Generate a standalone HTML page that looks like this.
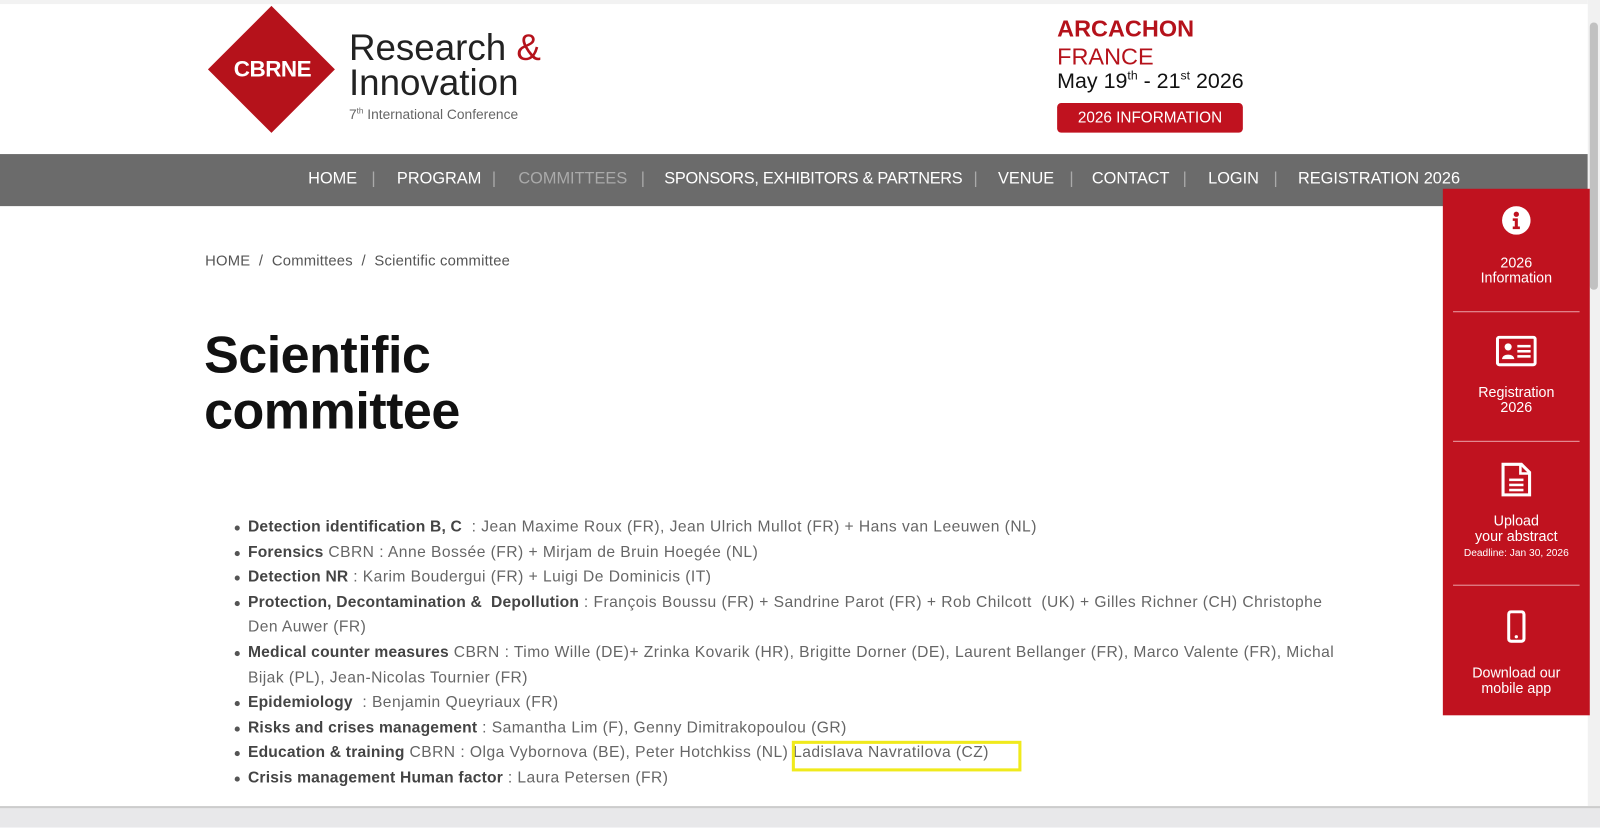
<!DOCTYPE html>
<html><head><meta charset="utf-8"><style>
*{margin:0;padding:0;box-sizing:border-box}
body{width:1600px;height:811px;overflow:hidden;background:#fff;font-family:"Liberation Sans",sans-serif;position:relative;color:#555}
#w{position:absolute;left:0;top:0;width:1568px;height:795px;transform:scale(1.0204);transform-origin:0 0}
.abs{position:absolute}
.nav{left:0;top:151px;width:1556px;height:51px;background:#6b6b6b;}
.nav span{position:absolute;top:16px;color:#fff;font-size:16px;white-space:nowrap}
.sep{color:#aaa!important}
.side{left:1414px;top:185px;width:144px;height:516px;background:#c0121f;color:#fff;text-align:center;font-size:14px;line-height:15px}
.side .hr{position:absolute;left:10px;width:124px;height:1px;background:#e9a0a6}
ul{position:absolute;left:243px;top:505px;width:1075px;font-size:15.3px;line-height:24.6px;color:#666;list-style:none;letter-spacing:0.45px}
li{position:relative}
li:before{content:"";position:absolute;left:-13px;top:10px;width:5px;height:5px;border-radius:50%;background:#555}
b{color:#444;letter-spacing:0.2px}
</style></head><body>
<div id="w">
<div class="abs" style="left:0;top:0;width:1556px;height:4px;background:#f2f2f2"></div>
<div class="abs" style="left:222px;top:24px;width:88px;height:88px;background:#b5121b;transform:rotate(45deg)"></div>
<div class="abs" style="left:207px;top:55px;width:120px;text-align:center;color:#fff;font-size:22px;font-weight:bold;letter-spacing:-0.5px">CBRNE</div>
<div class="abs" style="left:342px;top:30px;font-size:36px;color:#222;line-height:34px;letter-spacing:0px">Research <span style="color:#b5121b">&amp;</span><br>Innovation</div>
<div class="abs" style="left:342px;top:104px;font-size:13.5px;color:#666">7<sup style="font-size:8px">th</sup> International Conference</div>
<div class="abs" style="left:1036px;top:16px;font-size:23px;line-height:25px;color:#b5121b;font-weight:bold">ARCACHON</div>
<div class="abs" style="left:1036px;top:42px;font-size:23px;color:#b5121b">FRANCE</div>
<div class="abs" style="left:1036px;top:67px;font-size:21px;color:#111">May 19<sup style="font-size:12px">th</sup> - 21<sup style="font-size:12px">st</sup> 2026</div>
<div class="abs" style="left:1036px;top:101px;width:182px;height:29px;background:#c0121f;border-radius:4px;color:#fff;font-size:15px;text-align:center;line-height:29px">2026 INFORMATION</div>
<div class="abs nav">
<span style="left:302px">HOME</span><span class="sep" style="left:364px">|</span>
<span style="left:389px">PROGRAM</span><span class="sep" style="left:482px">|</span>
<span style="left:508px;color:#aaa">COMMITTEES</span><span class="sep" style="left:628px">|</span>
<span style="left:651px;letter-spacing:-0.3px">SPONSORS, EXHIBITORS &amp; PARTNERS</span><span class="sep" style="left:954px">|</span>
<span style="left:978px">VENUE</span><span class="sep" style="left:1048px">|</span>
<span style="left:1070px">CONTACT</span><span class="sep" style="left:1159px">|</span>
<span style="left:1184px">LOGIN</span><span class="sep" style="left:1248px">|</span>
<span style="left:1272px">REGISTRATION 2026</span>
</div>
<div class="abs" style="left:1556px;top:0;width:12px;height:790px;background:#f1f1f1"></div>
<div class="abs" style="left:1558px;top:22px;width:8px;height:262px;background:#c1c1c1;border-radius:4px"></div>
<div class="abs side">
<svg class="abs" style="left:58px;top:17px" width="28" height="28" viewBox="0 0 28 28"><circle cx="14" cy="14" r="14" fill="#fff"/><circle cx="14" cy="8" r="2.6" fill="#c0121f"/><path d="M10.5 12h5v8h2v2.5h-7V20h2v-5.5h-2z" fill="#c0121f"/></svg>
<div class="abs" style="left:0;top:65px;width:144px">2026<br>Information</div>
<div class="hr" style="top:120px"></div>
<svg class="abs" style="left:52px;top:144px" width="40" height="30" viewBox="0 0 40 30"><rect x="1.5" y="1.5" width="37" height="27" rx="2" fill="none" stroke="#fff" stroke-width="3"/><circle cx="12" cy="11" r="3.5" fill="#fff"/><path d="M6 23c0-6 12-6 12 0z" fill="#fff"/><rect x="21" y="9" width="13" height="2.5" fill="#fff"/><rect x="21" y="14" width="13" height="2.5" fill="#fff"/><rect x="21" y="19" width="13" height="2.5" fill="#fff"/></svg>
<div class="abs" style="left:0;top:192px;width:144px">Registration<br>2026</div>
<div class="hr" style="top:247px"></div>
<svg class="abs" style="left:57px;top:268px" width="30" height="34" viewBox="0 0 30 34"><path d="M2 2h18l8 8v22H2z" fill="none" stroke="#fff" stroke-width="3"/><path d="M19 2v9h9" fill="none" stroke="#fff" stroke-width="2.5"/><rect x="8" y="16" width="14" height="2.5" fill="#fff"/><rect x="8" y="21" width="14" height="2.5" fill="#fff"/><rect x="8" y="26" width="14" height="2.5" fill="#fff"/></svg>
<div class="abs" style="left:0;top:318px;width:144px">Upload<br>your abstract</div>
<div class="abs" style="left:0;top:350px;width:144px;font-size:10px">Deadline: Jan 30, 2026</div>
<div class="hr" style="top:388px"></div>
<svg class="abs" style="left:63px;top:413px" width="18" height="32" viewBox="0 0 18 32"><rect x="1.5" y="1.5" width="15" height="29" rx="2.5" fill="none" stroke="#fff" stroke-width="3"/><circle cx="9" cy="26" r="1.6" fill="#fff"/></svg>
<div class="abs" style="left:0;top:467px;width:144px">Download our<br>mobile app</div>
</div>
<div class="abs" style="left:201px;top:248px;font-size:14.5px;color:#555;letter-spacing:0.2px">HOME &nbsp;/ &nbsp;Committees &nbsp;/ &nbsp;Scientific committee</div>
<div class="abs" style="left:200px;top:320px;font-size:51px;font-weight:bold;color:#111;line-height:55px;letter-spacing:-0.5px">Scientific<br>committee</div>
<ul>
<li><b>Detection identification B, C</b> &nbsp;: Jean Maxime Roux (FR), Jean Ulrich Mullot (FR) + Hans van Leeuwen (NL)</li>
<li><b>Forensics</b> CBRN : Anne Bossée (FR) + Mirjam de Bruin Hoegée (NL)</li>
<li><b>Detection NR</b> : Karim Boudergui (FR) + Luigi De Dominicis (IT)</li>
<li><b>Protection, Decontamination &amp; &nbsp;Depollution</b> : François Boussu (FR) + Sandrine Parot (FR) + Rob Chilcott &nbsp;(UK) + Gilles Richner (CH) Christophe Den Auwer (FR)</li>
<li><b>Medical counter measures</b> CBRN : Timo Wille (DE)+ Zrinka Kovarik (HR), Brigitte Dorner (DE), Laurent Bellanger (FR), Marco Valente (FR), Michal Bijak (PL), Jean-Nicolas Tournier (FR)</li>
<li><b>Epidemiology</b> &nbsp;: Benjamin Queyriaux (FR)</li>
<li><b>Risks and crises management</b> : Samantha Lim (F), Genny Dimitrakopoulou (GR)</li>
<li><b>Education &amp; training</b> CBRN : Olga Vybornova (BE), Peter Hotchkiss (NL) Ladislava Navratilova (CZ)</li>
<li><b>Crisis management Human factor</b> : Laura Petersen (FR)</li>
</ul>
<div class="abs" style="left:776px;top:726px;width:225px;height:30px;border:3px solid #f0ea1c"></div>
<div class="abs" style="left:0;top:790px;width:1568px;height:21px;background:#e8e8ea;border-top:2px solid #ccc"></div>
</div>
</body></html>
